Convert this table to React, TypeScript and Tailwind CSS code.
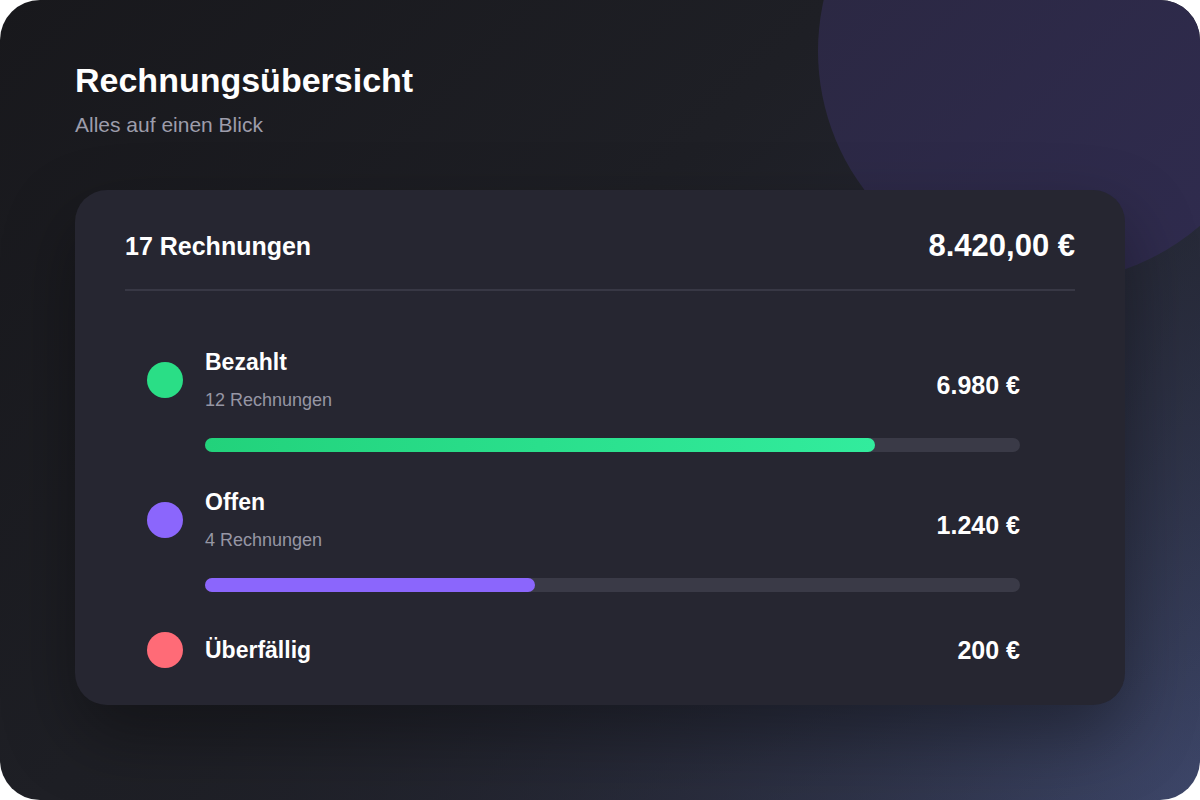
const rows = [
  {
    label: "Bezahlt",
    count: "12 Rechnungen",
    amount: "6.980 €",
    dot: "bg-[#2ade86]",
    bar: "bg-[linear-gradient(90deg,#22d27b,#32ec9d)]",
    fill: 82.2,
  },
  {
    label: "Offen",
    count: "4 Rechnungen",
    amount: "1.240 €",
    dot: "bg-[#8b66fc]",
    bar: "bg-[#8b66fc]",
    fill: 40.5,
  },
  {
    label: "Überfällig",
    amount: "200 €",
    dot: "bg-[#ff6b77]",
  },
];

const font = { fontFamily: '"Liberation Sans", Arial, sans-serif' };

export default function App() {
  return (
    <div className="w-[1200px] h-[800px] bg-white" style={font}>
      <div className="relative w-full h-full overflow-hidden rounded-[40px] bg-[linear-gradient(135deg,#18181c_0%,#1e1f25_42%,#25273200_100%),radial-gradient(circle_at_100%_100%,#3d4669_0%,#2d3146_45%,#20212a_80%)] px-[75px] pt-[60px]">
        {/* decorative blob top right */}
        <div className="absolute top-[-180px] right-[-80px] w-[462px] h-[462px] rounded-full bg-[linear-gradient(135deg,#2a2740,#302c50)]" />

        <div className="relative">
          <h1 className="text-[34px] leading-[40px] font-bold text-white">Rechnungsübersicht</h1>
          <p className="mt-[11px] text-[21px] leading-[28px] text-[#9d9dab]">Alles auf einen Blick</p>

          <div className="mt-[51px] w-[1050px] rounded-[32px] bg-[#262631] px-[50px] pt-[38px] pb-[37px] shadow-[0_30px_70px_rgba(0,0,0,0.35)]">
            <div className="flex items-center justify-between h-[36px]">
              <span className="text-[25px] leading-[32px] font-bold text-white">17 Rechnungen</span>
              <span className="text-[31px] leading-[36px] font-bold text-white">8.420,00 €</span>
            </div>
            <div className="mt-[25px] h-[2px] bg-[#383845]" />

            <div className="mt-[57px] pl-[22px] pr-[55px]">
              {rows.map((row, i) => (
                <div key={row.label} className={i === 0 ? "" : row.fill ? "mt-[36px]" : "mt-[40px]"}>
                  <div className="flex items-center">
                    <div className={`w-9 h-9 rounded-full ${row.dot}`} />
                    <div className="ml-[22px] flex flex-col">
                      <span className="text-[23px] leading-[28px] font-bold text-white">{row.label}</span>
                      {row.count && (
                        <span className="mt-[12px] text-[18px] leading-[24px] text-[#9696a4]">{row.count}</span>
                      )}
                    </div>
                    <span
                      className={`ml-auto text-[25px] leading-[32px] font-bold text-white ${row.count ? "mt-[10px]" : ""}`}
                    >
                      {row.amount}
                    </span>
                  </div>
                  {row.fill !== undefined && (
                    <div className="mt-[26px] ml-[58px] h-[14px] rounded-full bg-[#3a3a47]">
                      <div className={`h-full rounded-full ${row.bar}`} style={{ width: `${row.fill}%` }} />
                    </div>
                  )}
                </div>
              ))}
            </div>
          </div>
        </div>
      </div>
    </div>
  );
}
